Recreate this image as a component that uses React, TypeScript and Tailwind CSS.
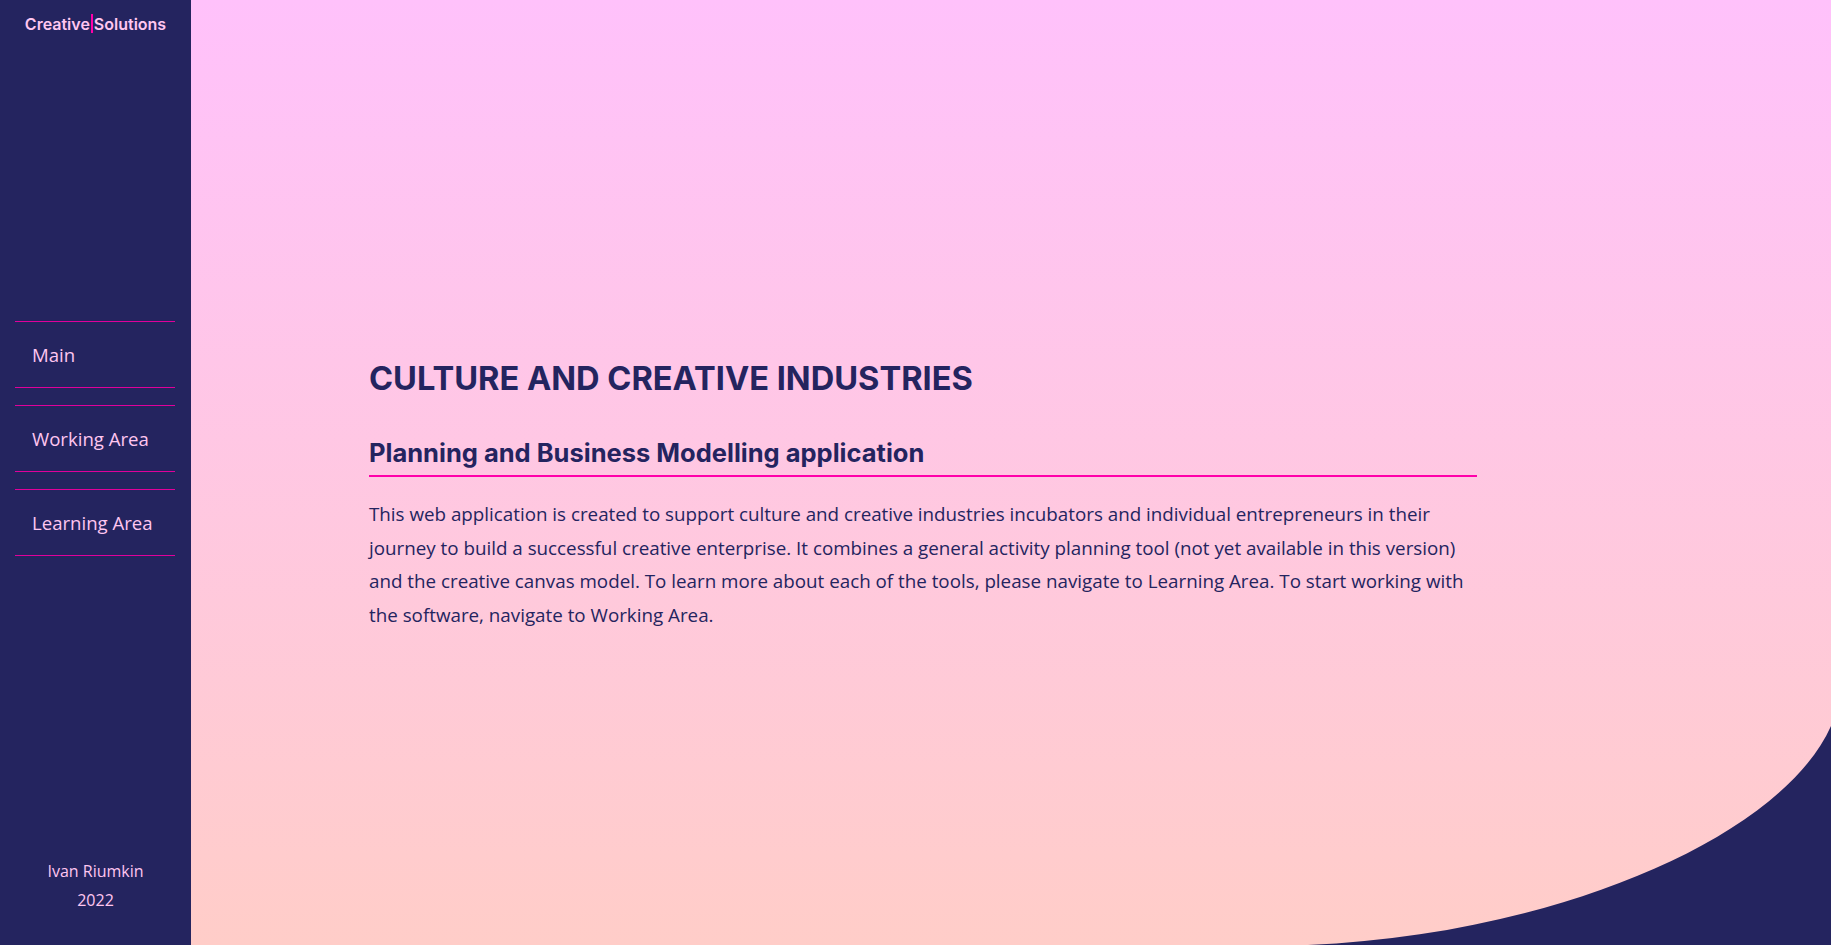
import React from "react";

const navItems = ["Main", "Working Area", "Learning Area"];

export default function App() {
  return (
    <div className="flex h-[945px] w-full overflow-hidden bg-[#24245f]" style={{ fontFamily: "'Open Sans', 'Noto Sans', sans-serif" }}>
      <aside className="flex h-full w-[191px] shrink-0 flex-col bg-[#24245f]">
        <div className="flex h-[46px] items-center justify-center pt-[1px]" style={{ fontFamily: "Inter, Roboto, sans-serif" }}>
          <span className="text-[16px] font-semibold leading-[20px] text-[#ffc6f0]">Creative</span>
          <span className="mx-[1px] h-[19px] w-[2px] bg-[#ff00aa]" />
          <span className="text-[16px] font-semibold leading-[20px] text-[#ffc6f0]">Solutions</span>
        </div>
        <nav className="ml-[15px] mr-[16px] mt-[275px] flex flex-col gap-[17px]">
          {navItems.map((n) => (
            <div key={n} className="flex h-[67px] items-center border-y border-[#e0009b] pb-[2px] pl-[17px] text-[18.6px] text-[#ffc6f0]">
              <span className="translate-y-[1px]">{n}</span>
            </div>
          ))}
        </nav>
        <div className="mt-auto flex flex-col items-center pb-[30px] text-[16px] leading-[29px] text-[#ffc6f0]">
          <span>Ivan Riumkin</span>
          <span>2022</span>
        </div>
      </aside>
      <main className="relative h-full flex-1 bg-gradient-to-b from-[#ffc1fb] to-[#ffcdc8]">
        <svg className="absolute inset-0 h-full w-full" viewBox="0 0 1640 945" preserveAspectRatio="none">
          <path d="M 1117 945 C 1359 935, 1589 840, 1640 726 L 1640 945 Z" fill="#24245f" />
        </svg>
        <div className="relative ml-[178px] w-[1108px] pt-[360px]">
          <h1
            className="text-[32.6px] font-bold leading-[36px] text-[#24245f]"
            style={{ fontFamily: "Inter, Roboto, sans-serif" }}
          >
            CULTURE AND CREATIVE INDUSTRIES
          </h1>
          <h2
            className="mt-[42px] border-b-2 border-[#ff00aa] pb-[8px] text-[25.5px] font-bold leading-[29px] text-[#24245f]"
            style={{ fontFamily: "Inter, Roboto, sans-serif" }}
          >
            Planning and Business Modelling application
          </h2>
          <p className="mt-[21px] text-[18.8px] leading-[33.5px] text-[#24245f]">
            This web application is created to support culture and creative industries incubators and individual entrepreneurs in their
            <br />
            journey to build a successful creative enterprise. It combines a general activity planning tool (not yet available in this version)
            <br />
            and the creative canvas model. To learn more about each of the tools, please navigate to Learning Area. To start working with
            <br />
            the software, navigate to Working Area.
          </p>
        </div>
      </main>
    </div>
  );
}
